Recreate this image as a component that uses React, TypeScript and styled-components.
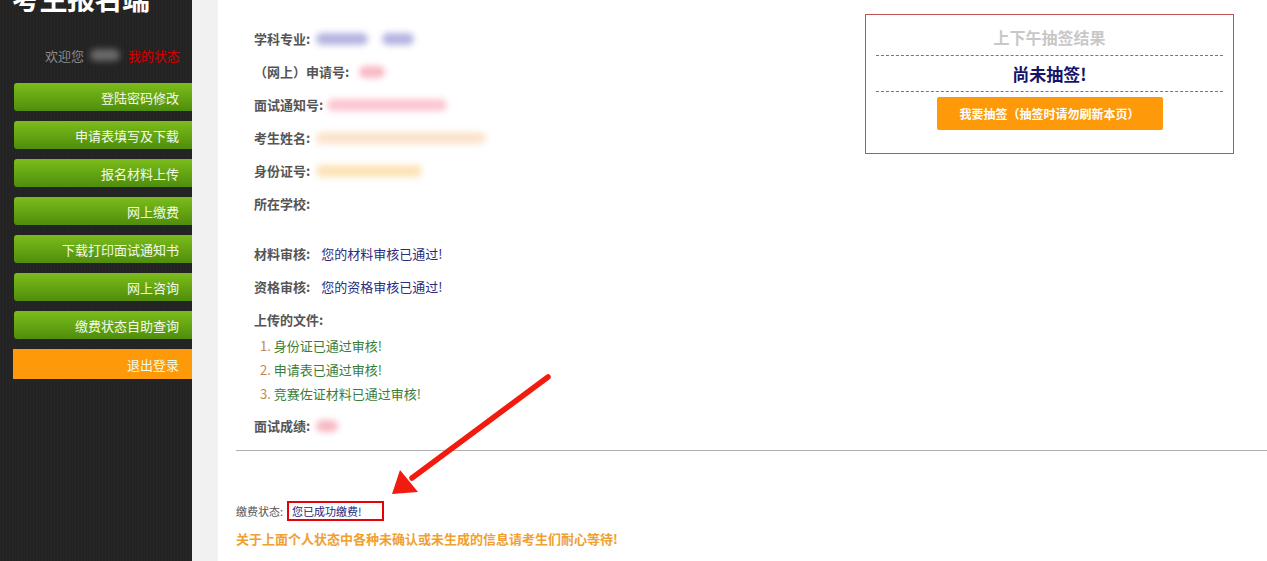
import React from "react";
import styled, { createGlobalStyle } from "styled-components";

const Global = createGlobalStyle`
  html, body { margin: 0; padding: 0; background: #fff; }
  body { font-family: "Noto Sans CJK SC", "Noto Sans", "Liberation Sans", sans-serif; overflow: hidden; }
  * { box-sizing: border-box; }
`;

const Page = styled.div`
  position: relative;
  display: flex;
  width: 1267px;
  height: 561px;
  overflow: hidden;
`;

const Sidebar = styled.aside`
  width: 192px;
  flex-shrink: 0;
  background: #232323;
  background-image: repeating-linear-gradient(90deg, rgba(255,255,255,0.015) 0 1px, transparent 1px 3px);
  display: flex;
  flex-direction: column;
  padding-left: 14px;
`;

const Title = styled.h1`
  margin: -17px 0 0 -2px;
  font-size: 28px;
  line-height: 30px;
  font-weight: 700;
  color: #fff;
  letter-spacing: -0.5px;
`;

const Welcome = styled.div`
  display: flex;
  align-items: center;
  justify-content: flex-end;
  padding-right: 12px;
  margin-top: 32px;
  height: 20px;
  font-size: 13px;
  color: #8a8a8a;
`;

const Blob = styled.span<{ $w: number; $c: string; $ml?: number }>`
  display: inline-block;
  width: ${(p) => p.$w}px;
  height: 12px;
  margin-left: ${(p) => p.$ml ?? 0}px;
  border-radius: 6px;
  background: ${(p) => p.$c};
  filter: blur(3px);
  vertical-align: middle;
`;

const MyState = styled.span`
  color: #d40000;
  margin-left: 8px;
`;

const Menu = styled.nav`
  display: flex;
  flex-direction: column;
  gap: 10px;
  margin-top: 18px;
`;

const MenuButton = styled.div<{ $exit?: boolean }>`
  display: flex;
  align-items: center;
  justify-content: flex-end;
  padding-right: 13px;
  font-size: 13px;
  color: #f4fae8;
  border-radius: ${(p) => (p.$exit ? "0" : "3px 0 0 3px")};
  margin-left: ${(p) => (p.$exit ? "-1px" : "0")};
  height: ${(p) => (p.$exit ? "30px" : "28px")};
  background: ${(p) =>
    p.$exit
      ? "#fe9a0a"
      : "linear-gradient(180deg, #7cbc1c 0%, #67a814 45%, #4f8d0c 100%)"};
`;

const Gutter = styled.div`
  width: 26px;
  flex-shrink: 0;
  background: #f1f1f1;
`;

const Main = styled.main`
  flex: 1;
  display: flex;
  flex-direction: column;
  padding-left: 18px;
  background: #fff;
`;

const Top = styled.div`
  display: flex;
  align-items: flex-start;
`;

const Info = styled.div`
  flex: 1;
  padding: 22px 0 0 18px;
  display: flex;
  flex-direction: column;
`;

const Row = styled.div<{ $gap?: number }>`
  height: 33px;
  display: flex;
  align-items: center;
  margin-top: ${(p) => p.$gap ?? 0}px;
  font-size: 13px;
`;

const Label = styled.span`
  font-weight: 700;
  color: #555;
  margin-right: 4px;
`;

const Value = styled.span`
  color: #2b2b80;
  margin-left: 4px;
`;

const FileList = styled.ol`
  margin: -3px 0 4px 0;
  padding-left: 6px;
  list-style: none;
  counter-reset: item;
`;

const FileItem = styled.li`
  height: 24px;
  display: flex;
  align-items: center;
  font-size: 13px;
  color: #3a7d3a;
  counter-increment: item;
  &::before {
    content: counter(item) ". ";
    color: #c08a50;
    white-space: pre;
  }
`;

const DrawBox = styled.section`
  width: 369px;
  height: 140px;
  margin: 14px 33px 0 0;
  border: 1px solid #bb5555;
  padding: 0 10px;
  display: flex;
  flex-direction: column;
  align-items: stretch;
`;

const DrawTitle = styled.div`
  height: 41px;
  padding-top: 3px;
  display: flex;
  align-items: center;
  justify-content: center;
  font-size: 16px;
  font-weight: 700;
  color: #c8c8c8;
  border-bottom: 1px dashed #777;
`;

const DrawState = styled.div`
  height: 36px;
  display: flex;
  align-items: center;
  justify-content: center;
  font-size: 17px;
  font-weight: 700;
  color: #14146a;
  border-bottom: 1px dashed #777;
`;

const DrawButton = styled.button`
  align-self: center;
  margin-top: 5px;
  width: 226px;
  height: 33px;
  border: none;
  border-radius: 2px;
  background: #fe9a0a;
  color: #fff;
  font-family: inherit;
  font-size: 12px;
  font-weight: 700;
`;

const Divider = styled.hr`
  margin: 8px 0 0 0;
  border: none;
  border-top: 1px solid #b0b0b0;
  height: 0;
`;

const PayRow = styled.div`
  margin-top: 50px;
  display: flex;
  align-items: center;
  font-size: 11px;
  color: #555;
`;

const PayBox = styled.span`
  margin-left: 4px;
  width: 97px;
  height: 20px;
  border: 2px solid #e8000b;
  display: flex;
  align-items: center;
  padding-left: 3px;
  color: #22227a;
`;

const Notice = styled.div`
  margin-top: 8px;
  font-size: 13px;
  font-weight: 700;
  color: #f0a030;
`;

const ArrowLayer = styled.svg`
  position: absolute;
  top: 0;
  left: 0;
  pointer-events: none;
`;

const menu = [
  "登陆密码修改",
  "申请表填写及下载",
  "报名材料上传",
  "网上缴费",
  "下载打印面试通知书",
  "网上咨询",
  "缴费状态自助查询",
];

export default function App() {
  return (
    <>
      <Global />
      <Page>
        <Sidebar>
          <Title>考生报名端</Title>
          <Welcome>
            欢迎您
            <Blob $w={30} $c="#6a6a6a" $ml={6} />
            <MyState>我的状态</MyState>
          </Welcome>
          <Menu>
            {menu.map((m) => (
              <MenuButton key={m}>{m}</MenuButton>
            ))}
            <MenuButton $exit>退出登录</MenuButton>
          </Menu>
        </Sidebar>
        <Gutter />
        <Main>
          <Top>
            <Info>
              <Row>
                <Label>学科专业:</Label>
                <Blob $w={52} $c="#b4b4e2" $ml={2} />
                <Blob $w={32} $c="#b4b4e2" $ml={14} />
              </Row>
              <Row>
                <Label>（网上）申请号:</Label>
                <Blob $w={26} $c="#f8b8c4" $ml={6} />
              </Row>
              <Row>
                <Label>面试通知号:</Label>
                <Blob $w={120} $c="#fcc6d0" $ml={0} />
              </Row>
              <Row>
                <Label>考生姓名:</Label>
                <Blob $w={170} $c="#fbe3cc" $ml={2} />
              </Row>
              <Row>
                <Label>身份证号:</Label>
                <Blob $w={106} $c="#fde2b6" $ml={2} />
              </Row>
              <Row>
                <Label>所在学校:</Label>
              </Row>
              <Row $gap={17}>
                <Label>材料审核:</Label>
                <Value>&nbsp;您的材料审核已通过!</Value>
              </Row>
              <Row>
                <Label>资格审核:</Label>
                <Value>&nbsp;您的资格审核已通过!</Value>
              </Row>
              <Row>
                <Label>上传的文件:</Label>
              </Row>
              <FileList>
                <FileItem>身份证已通过审核!</FileItem>
                <FileItem>申请表已通过审核!</FileItem>
                <FileItem>竞赛佐证材料已通过审核!</FileItem>
              </FileList>
              <Row>
                <Label>面试成绩:</Label>
                <Blob $w={22} $c="#f8b8c4" $ml={2} />
              </Row>
            </Info>
            <DrawBox>
              <DrawTitle>上下午抽签结果</DrawTitle>
              <DrawState>尚未抽签!</DrawState>
              <DrawButton>我要抽签（抽签时请勿刷新本页）</DrawButton>
            </DrawBox>
          </Top>
          <Divider />
          <PayRow>
            缴费状态:
            <PayBox>您已成功缴费!</PayBox>
          </PayRow>
          <Notice>关于上面个人状态中各种未确认或未生成的信息请考生们耐心等待!</Notice>
        </Main>
        <ArrowLayer width="1267" height="561" viewBox="0 0 1267 561">
          <line x1="548" y1="377" x2="412" y2="478" stroke="#f21b0f" strokeWidth="5.5" strokeLinecap="round" />
          <polygon points="392,494 400,470 418,492" fill="#f21b0f" />
        </ArrowLayer>
      </Page>
    </>
  );
}
